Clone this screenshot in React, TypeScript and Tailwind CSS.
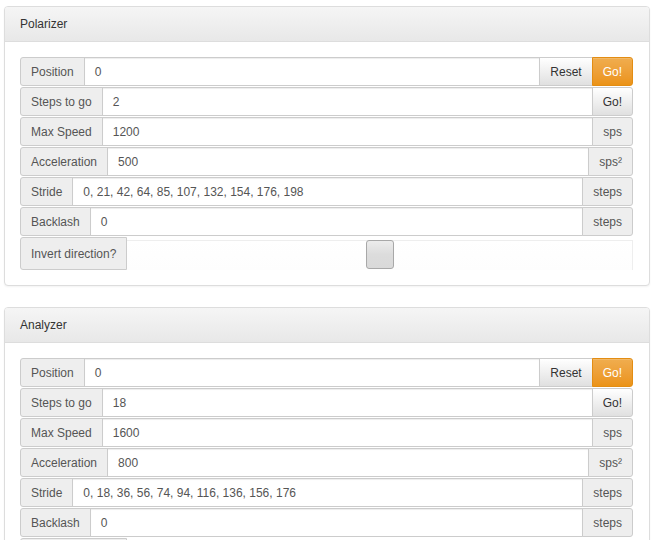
type Btn = { text: string; kind: "addon" | "default" | "warning" };

type Row = { label: string; value: string; right: Btn[] };

const polarizer: Row[] = [
  { label: "Position", value: "0", right: [{ text: "Reset", kind: "default" }, { text: "Go!", kind: "warning" }] },
  { label: "Steps to go", value: "2", right: [{ text: "Go!", kind: "default" }] },
  { label: "Max Speed", value: "1200", right: [{ text: "sps", kind: "addon" }] },
  { label: "Acceleration", value: "500", right: [{ text: "sps²", kind: "addon" }] },
  { label: "Stride", value: "0, 21, 42, 64, 85, 107, 132, 154, 176, 198", right: [{ text: "steps", kind: "addon" }] },
  { label: "Backlash", value: "0", right: [{ text: "steps", kind: "addon" }] },
];

const analyzer: Row[] = [
  { label: "Position", value: "0", right: [{ text: "Reset", kind: "default" }, { text: "Go!", kind: "warning" }] },
  { label: "Steps to go", value: "18", right: [{ text: "Go!", kind: "default" }] },
  { label: "Max Speed", value: "1600", right: [{ text: "sps", kind: "addon" }] },
  { label: "Acceleration", value: "800", right: [{ text: "sps²", kind: "addon" }] },
  { label: "Stride", value: "0, 18, 36, 56, 74, 94, 116, 136, 156, 176", right: [{ text: "steps", kind: "addon" }] },
  { label: "Backlash", value: "0", right: [{ text: "steps", kind: "addon" }] },
];

function Right({ b, last }: { b: Btn; last: boolean }) {
  const base = `flex items-center px-[10px] border -ml-px ${last ? "rounded-r-[3px]" : ""}`;
  if (b.kind === "warning")
    return (
      <div className={`${base} border-[#e38d13] bg-gradient-to-b from-[#f0ad4e] to-[#eb9316] text-white shadow-[inset_0_1px_0_rgba(255,255,255,0.15)]`}>
        {b.text}
      </div>
    );
  if (b.kind === "default")
    return (
      <div className={`${base} border-[#ccc] bg-gradient-to-b from-white to-[#e0e0e0] text-[#333]`}>
        {b.text}
      </div>
    );
  return <div className={`${base} border-[#ccc] bg-[#eee] text-[#555]`}>{b.text}</div>;
}

function InputRow({ row }: { row: Row }) {
  return (
    <div className="flex h-[29px] mb-px text-[12px] text-[#555]">
      <div className="flex items-center px-[10px] border border-[#ccc] bg-[#eee] rounded-l-[3px] whitespace-nowrap">
        {row.label}
      </div>
      <div className="flex-1 flex items-center px-[10px] border border-[#ccc] -ml-px bg-white shadow-[inset_0_1px_1px_rgba(0,0,0,0.075)]">
        {row.value}
      </div>
      {row.right.map((b, i) => (
        <Right key={i} b={b} last={i === row.right.length - 1} />
      ))}
    </div>
  );
}

function Panel({ title, rows }: { title: string; rows: Row[] }) {
  return (
    <div className="w-[646px] border border-[#ddd] rounded-[4px] bg-white mb-[21px] shadow-[0_1px_2px_rgba(0,0,0,0.05)]">
      <div className="h-[35px] flex items-center px-[15px] border-b border-[#ddd] rounded-t-[3px] bg-gradient-to-b from-[#f5f5f5] to-[#e8e8e8] text-[12px] text-[#333]">
        {title}
      </div>
      <div className="pt-[15px] pb-[15px] pl-[15px] pr-[16px]">
        {rows.map((r) => (
          <InputRow key={r.label} row={r} />
        ))}
        <div className="flex text-[12px] text-[#555]">
          <div className="h-[33px] flex items-center px-[10px] border border-[#ccc] bg-[#eee] rounded-l-[3px] whitespace-nowrap">
            Invert direction?
          </div>
          <div className="flex-1 mt-[3px] h-[30px] border-t border-r border-[#eee] bg-gradient-to-b from-white to-[#fdfdfd] flex justify-center">
            <div className="w-[28px] h-[29px] -mt-px border border-[#a8a8a8] rounded-[3px] bg-gradient-to-b from-[#ececec] via-[#dcdcdc] to-[#d9d9d9]" />
          </div>
        </div>
      </div>
    </div>
  );
}

export default function App() {
  return (
    <div className="pl-[4px] pt-[6px] bg-white min-h-screen" style={{ fontFamily: '"Liberation Sans", Arial, sans-serif' }}>
      <Panel title="Polarizer" rows={polarizer} />
      <Panel title="Analyzer" rows={analyzer} />
    </div>
  );
}
